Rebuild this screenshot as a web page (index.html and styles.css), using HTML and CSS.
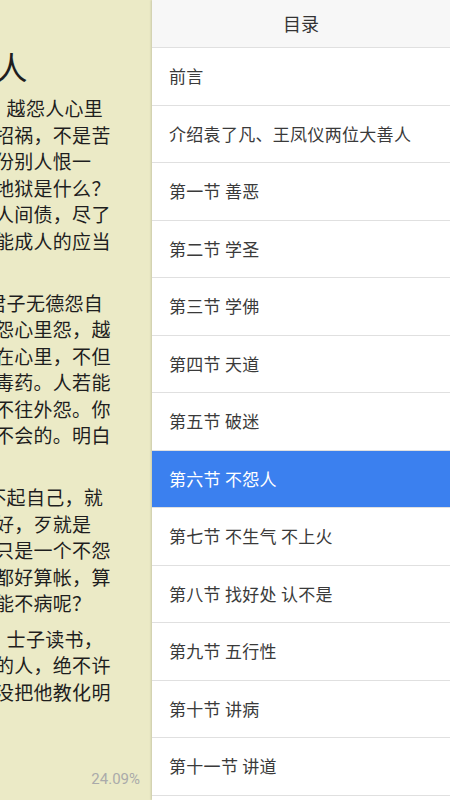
FILE: index.html
```html
<!DOCTYPE html>
<html lang="zh-CN">
<head>
    <meta charset="UTF-8">
    <meta name="viewport" content="width=device-width, initial-scale=1.0">
    <title>不怨人 - 阅读</title>
    <link rel="stylesheet" href="styles.css">
</head>
<body>
    <div class="screen">
        <!-- 正文页（被目录推到左边） -->
        <div class="reader">
            <div class="page">
                <div class="content">
                    <h1 class="chapter-title">第六节 不怨人</h1>
                    <p>人若是怨人，心里就越怨，越怨人心里越存毒，怨气越重，就是自己招祸，不是苦了别人。心多一分怨，就多一份别人恨一层，这就是造地狱。你想想，地狱是什么？就是心里的怨气，是没还清的人间债，尽了人道，不怨人，心里清净了才能成人的应当尽的本分。</p>
                    <p>常言：小人无德怨别人，君子无德怨自己。凡是爱怨人的人，嘴上不怨心里怨，越怨越深，怨气一股一股地积存在心里，不但伤了自己的身子，还胜过吃了毒药。人若能回头认不是，只找自己的错，不往外怨。你想想他还会生病吗？那是绝对不会的。明白了这个道理就好了。</p>
                    <p>人为什么怨人？是因为看不起自己，就往外怨。心里要有数：好就是好，歹就是歹。人生在世，最要紧的事，只是一个不怨字。不怨人，跟什么人在一起都好算帐，算得明明白白。若是怨人，又怎能不病呢？</p>
                    <p>王凤仪先生常对弟子们说：士子读书，要学明理，明了理，就是真正的人，绝不许怨人。别人不好，要怨自己还没把他教化明白。</p>
                </div>
                <div class="progress">24.09%</div>
            </div>
        </div>

        <!-- 目录 -->
        <div class="toc">
            <div class="toc-title">目录</div>
            <ul class="toc-list">
                <li class="toc-item">前言</li>
                <li class="toc-item">介绍袁了凡、王凤仪两位大善人</li>
                <li class="toc-item">第一节 善恶</li>
                <li class="toc-item">第二节 学圣</li>
                <li class="toc-item">第三节 学佛</li>
                <li class="toc-item">第四节 天道</li>
                <li class="toc-item">第五节 破迷</li>
                <li class="toc-item active">第六节 不怨人</li>
                <li class="toc-item">第七节 不生气 不上火</li>
                <li class="toc-item">第八节 找好处 认不是</li>
                <li class="toc-item">第九节 五行性</li>
                <li class="toc-item">第十节 讲病</li>
                <li class="toc-item">第十一节 讲道</li>
                <li class="toc-item">第十二节 讲性</li>
            </ul>
        </div>
    </div>
</body>
</html>
```

FILE: styles.css
```css
body {
    margin: 0;
    overflow: hidden;
    font-family: "Noto Sans CJK SC", sans-serif;
}
.screen {
    display: flex;
    width: 450px;
    height: 800px;
}

/* 正文 */
.reader {
    flex: none;
    width: 152px;
    display: flex;
    justify-content: flex-end;
    overflow: hidden;
    background: #ebeac6;
}
.page {
    flex: none;
    width: 450px;
    height: 800px;
    box-sizing: border-box;
    padding: 46px 12px 11px 42px;
    display: flex;
    flex-direction: column;
    color: #1e1e1e;
}
.content {
    width: 368px;
}
.chapter-title {
    margin: 0 0 2px;
    font-size: 32px;
    font-weight: normal;
    line-height: 40px;
    text-align: center;
    white-space: nowrap;
}
.content p {
    margin: 9px 0 0;
    font-size: 19px;
    letter-spacing: 0.3px;
    line-height: 26.5px;
    text-indent: 31px;
}
.progress {
    margin-top: auto;
    text-align: right;
    font-family: Roboto, sans-serif;
    font-size: 15px;
    line-height: 20px;
    color: #aaa;
}

/* 目录 */
.toc {
    flex: 1;
    height: 800px;
    overflow: hidden;
    background: #fff;
    box-shadow: -1px 0 2px rgba(0,0,0,0.15);
}
.toc-title {
    height: 47px;
    line-height: 47px;
    border-bottom: 1px solid #e0e0e0;
    background: #f7f7f7;
    text-align: center;
    font-size: 18px;
    color: #333;
}
.toc-list {
    list-style: none;
    margin: 0;
    padding: 0;
}
.toc-item {
    height: 56.5px;
    line-height: 56.5px;
    border-bottom: 1px solid #e0e0e0;
    padding-left: 17px;
    font-size: 17px;
    letter-spacing: 0.3px;
    color: #3a3a3a;
    white-space: nowrap;
}
.toc-item.active {
    background: #3b80ef;
    color: #fff;
}
```
